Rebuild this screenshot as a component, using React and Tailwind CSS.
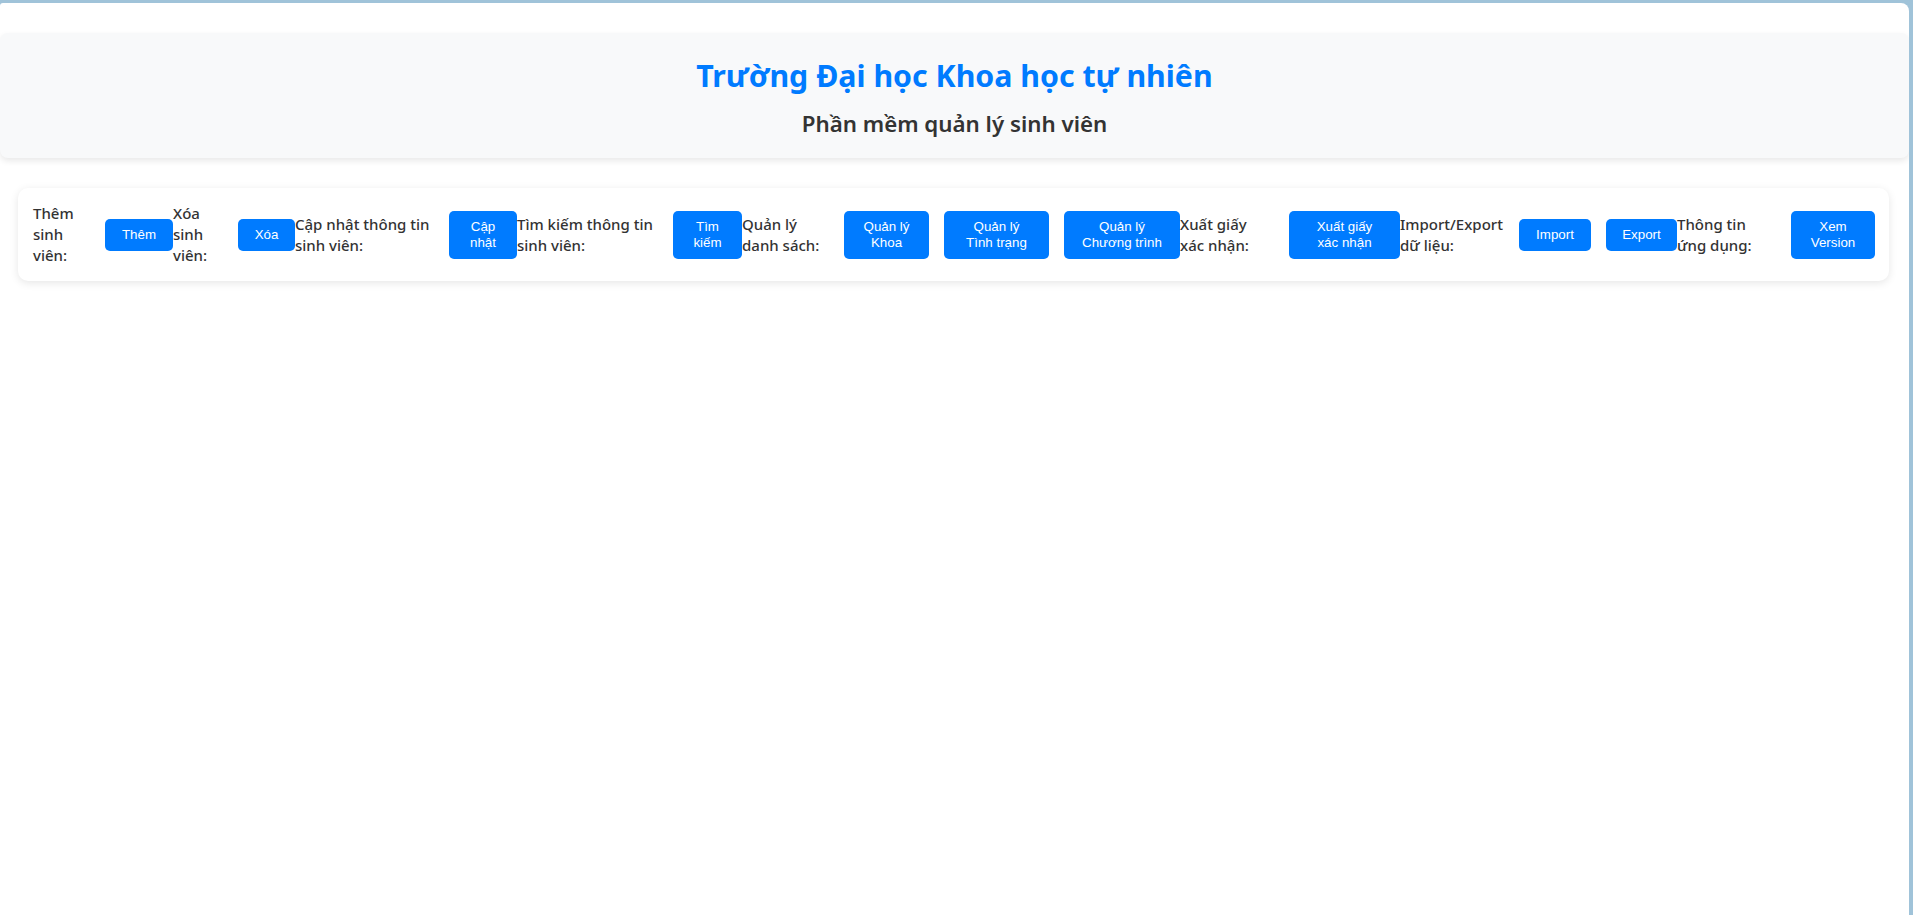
import React from "react";

function Label({ w, children }) {
  return (
    <div
      className={`shrink-0 whitespace-nowrap text-[15px] leading-[21px] font-medium text-[#333333] ${w}`}
    >
      {children}
    </div>
  );
}

function Btn({ w, tall, children }) {
  return (
    <button
      className={`shrink-0 ml-[15px] rounded-[5px] bg-[#007bff] text-white text-[13.333px] leading-[16px] text-center font-['Liberation_Sans',Arial,sans-serif] ${w} ${tall ? "h-[48px]" : "h-[32px]"}`}
    >
      {children}
    </button>
  );
}

export default function App() {
  return (
    <div className="h-screen w-full bg-[#a0c3d9] pt-[3px] pr-[4px] font-['Segoe_UI','Noto_Sans',sans-serif]">
      <div className="h-full w-full bg-white rounded-tr-[8px] rounded-tl-[3px] overflow-hidden pt-[30px]">
        <header className="bg-[#f8f9fa] rounded-[8px] shadow-[0_3px_6px_rgba(0,0,0,0.09)] h-[125px] flex flex-col items-center pt-[21px]">
          <h1 className="text-[30.3px] leading-[44px] font-bold text-[#007bff]">
            Trường Đại học Khoa học tự nhiên
          </h1>
          <h2 className="mt-[10px] text-[22.3px] leading-[32px] font-semibold text-[#333333]">
            Phần mềm quản lý sinh viên
          </h2>
        </header>
        <div className="mt-[30px] ml-[18px] mr-[20px] bg-white rounded-[10px] shadow-[0_2px_8px_rgba(0,0,0,0.1)] p-[15px] flex items-center">
          <Label w="w-[57px]">Thêm<br />sinh<br />viên:</Label>
          <Btn w="w-[68px]">Thêm</Btn>
          <Label w="w-[50px]">Xóa<br />sinh<br />viên:</Label>
          <Btn w="w-[57px]">Xóa</Btn>
          <Label w="w-[139px]">Cập nhật thông tin<br />sinh viên:</Label>
          <Btn w="w-[68px]" tall>Cập<br />nhật</Btn>
          <Label w="w-[141px]">Tìm kiếm thông tin<br />sinh viên:</Label>
          <Btn w="w-[69px]" tall>Tìm<br />kiếm</Btn>
          <Label w="w-[87px]">Quản lý<br />danh sách:</Label>
          <Btn w="w-[85px]" tall>Quản lý<br />Khoa</Btn>
          <Btn w="w-[105px]" tall>Quản lý<br />Tình trạng</Btn>
          <Btn w="w-[116px]" tall>Quản lý<br />Chương trình</Btn>
          <Label w="w-[94px]">Xuất giấy<br />xác nhận:</Label>
          <Btn w="w-[111px]" tall>Xuất giấy<br />xác nhận</Btn>
          <Label w="w-[104px]">Import/Export<br />dữ liệu:</Label>
          <Btn w="w-[72px]">Import</Btn>
          <Btn w="w-[71px]">Export</Btn>
          <Label w="w-[99px]">Thông tin<br />ứng dụng:</Label>
          <Btn w="w-[84px]" tall>Xem<br />Version</Btn>
        </div>
      </div>
    </div>
  );
}
